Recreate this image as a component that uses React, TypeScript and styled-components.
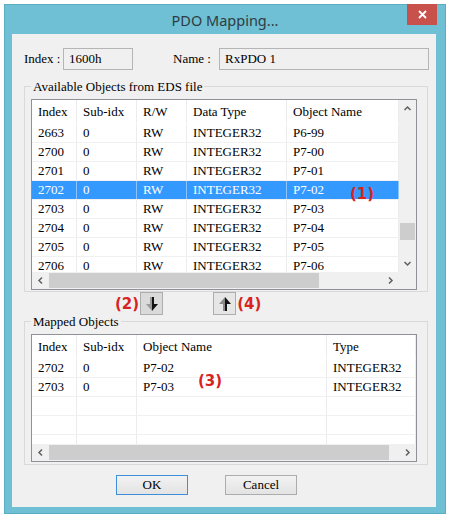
import React from "react";
import styled, { createGlobalStyle } from "styled-components";

const GlobalStyle = createGlobalStyle`
  html, body {
    margin: 0;
    padding: 0;
    background: #ffffff;
  }
  body {
    font-family: "Liberation Serif", "DejaVu Serif", "Times New Roman", serif;
    font-size: 13px;
    color: #000;
  }
`;

const serif = `"Liberation Serif", "DejaVu Serif", "Times New Roman", serif`;

const Frame = styled.div`
  margin: 4px 0 0 4px;
  width: 442px;
  height: 510px;
  box-sizing: border-box;
  background: #6fc0d4;
  border: 1px solid #5aaec2;
  display: flex;
  flex-direction: column;
  padding: 0 9px 6px 7px;
  font-family: ${serif};
`;

const TitleBar = styled.div`
  position: relative;
  height: 29px;
  flex: none;
  margin: 0 -9px 0 -7px;
  display: flex;
  align-items: center;
  justify-content: center;
`;

const Title = styled.span`
  font-family: "Noto Sans", "Open Sans", sans-serif;
  font-size: 14.5px;
  color: #2e3c42;
  padding-top: 1px;
`;

const CloseButton = styled.div`
  position: absolute;
  top: -1px;
  right: 8px;
  width: 30px;
  height: 21px;
  background: #c9514b;
  display: flex;
  align-items: center;
  justify-content: center;
`;

const Client = styled.div`
  flex: 1;
  background: #f0f0f0;
  display: flex;
  flex-direction: column;
  font-family: ${serif};
`;

const FieldRow = styled.div`
  margin-top: 14px;
  height: 22px;
  display: flex;
  align-items: center;
  padding-left: 12px;
`;

const FieldLabel = styled.span<{ $w: number; $ml?: number }>`
  width: ${p => p.$w}px;
  margin-left: ${p => p.$ml ?? 0}px;
  font-family: ${serif};
  font-size: 13px;
`;

const ReadOnlyBox = styled.div<{ $w: number }>`
  width: ${p => p.$w}px;
  height: 22px;
  box-sizing: border-box;
  border: 1px solid #b5b5b5;
  background: #f0f0f0;
  padding-left: 5px;
  line-height: 19px;
  font-family: ${serif};
`;

const GroupBox = styled.fieldset<{ $mt: number; $pb: number }>`
  margin: ${p => p.$mt}px 8px 0 12px;
  width: 404px;
  box-sizing: border-box;
  border: 1px solid #d9d9d9;
  padding: 6px 10px ${p => p.$pb}px 6px;
  min-inline-size: 0;
  font-family: ${serif};
`;

const GroupLegend = styled.legend`
  padding: 0 2px;
  line-height: 13px;
  font-family: ${serif};
  font-size: 13px;
`;

const ListView = styled.div<{ $h: number; $vscroll?: boolean }>`
  position: relative;
  width: 386px;
  height: ${p => p.$h}px;
  box-sizing: border-box;
  border: 1px solid #8e9296;
  background: #ffffff;
  display: grid;
  grid-template-columns: ${p => (p.$vscroll ? "1fr 17px" : "1fr")};
  grid-template-rows: 1fr 17px;
`;

const Rows = styled.div`
  overflow: hidden;
  min-width: 0;
`;

const Row = styled.div<{ $cols: string; $header?: boolean; $selected?: boolean }>`
  display: grid;
  grid-template-columns: ${p => p.$cols};
  height: ${p => (p.$header ? 24 : 19)}px;
  box-sizing: border-box;
  border-bottom: 1px solid ${p => (p.$header ? "#ffffff" : "#f0f0f0")};
  background: ${p => (p.$selected ? "#3399ff" : "#ffffff")};
  color: ${p => (p.$selected ? "#ffffff" : "#000000")};
`;

const Cell = styled.div<{ $selected?: boolean }>`
  padding-left: 6px;
  border-right: 1px solid ${p => (p.$selected ? "#8cc4ff" : "#ececec")};
  white-space: nowrap;
  overflow: hidden;
  display: flex;
  align-items: center;
  font-family: ${serif};
  font-size: 13px;
`;

const HScroll = styled.div`
  display: flex;
  background: #f0f0f0;
  min-width: 0;
`;

const VScroll = styled.div`
  display: flex;
  flex-direction: column;
  background: #f0f0f0;
`;

const Corner = styled.div`
  background: #f0f0f0;
`;

const ScrollArrow = styled.div`
  width: 17px;
  height: 17px;
  flex: none;
  display: flex;
  align-items: center;
  justify-content: center;
`;

const HTrack = styled.div`
  flex: 1;
  display: flex;
  align-items: center;
`;

const HThumb = styled.div<{ $w: number }>`
  width: ${p => p.$w}px;
  height: 15px;
  background: #cdcdcd;
`;

const VTrack = styled.div`
  flex: 1;
  display: flex;
  flex-direction: column;
  align-items: center;
`;

const VThumb = styled.div<{ $top: number }>`
  margin-top: ${p => p.$top}px;
  width: 15px;
  height: 17px;
  background: #cdcdcd;
`;

const Note = styled.span<{ $ml?: number }>`
  font-family: "DejaVu Sans", "Verdana", sans-serif;
  font-weight: bold;
  font-size: 15px;
  color: #d8231f;
  line-height: 18px;
  margin-left: ${p => p.$ml ?? 0}px;
`;

const OverNote = styled(Note)<{ $left: number; $top: number }>`
  position: absolute;
  left: ${p => p.$left}px;
  top: ${p => p.$top}px;
`;

const ArrowRow = styled.div`
  height: 23px;
  display: flex;
  align-items: center;
  padding-left: 103px;
`;

const MoveButton = styled.div<{ $ml?: number; $light?: boolean }>`
  width: 23px;
  height: 23px;
  box-sizing: border-box;
  margin-left: ${p => p.$ml ?? 0}px;
  border: 1px solid #adadad;
  background: ${p => (p.$light ? "#e6e6e6" : "#dadada")};
  display: flex;
  align-items: center;
  justify-content: center;
`;

const ButtonRow = styled.div`
  margin-top: 10px;
  display: flex;
  padding-left: 104px;
  gap: 37px;
`;

const DialogButton = styled.div<{ $default?: boolean }>`
  width: 72px;
  height: 20px;
  box-sizing: border-box;
  border: 1px solid ${p => (p.$default ? "#3c8fd8" : "#acacac")};
  background: linear-gradient(#f2f2f2, #e3e3e3);
  display: flex;
  align-items: center;
  justify-content: center;
  font-family: ${serif};
  font-size: 13px;
`;

type Dir = "up" | "down" | "left" | "right";

const Chevron: React.FC<{ dir: Dir }> = ({ dir }) => {
  const pts = {
    up: "1.5,6 4.5,3 7.5,6",
    down: "1.5,3 4.5,6 7.5,3",
    left: "6,1.5 3,4.5 6,7.5",
    right: "3,1.5 6,4.5 3,7.5",
  }[dir];
  return (
    <svg width="9" height="9" viewBox="0 0 9 9">
      <polyline points={pts} fill="none" stroke="#5f5f5f" strokeWidth="1.5" />
    </svg>
  );
};

const BigArrow: React.FC<{ up?: boolean }> = ({ up }) => (
  <svg width="14" height="16" viewBox="0 0 14 16" style={{ transform: up ? "scaleY(-1)" : undefined }}>
    <polygon points="5,1 7,1 7,15 1,8 5,8" fill={up ? "#8a8a8a" : "#9a9a9a"} />
    <polygon points="7,1 9,1 9,8 13,8 7,15" fill="#111" />
  </svg>
);

const topCols = "45px 60px 50px 100px 1fr";
const bottomCols = "45px 60px 190px 1fr";

const available = [
  ["2663", "0", "RW", "INTEGER32", "P6-99"],
  ["2700", "0", "RW", "INTEGER32", "P7-00"],
  ["2701", "0", "RW", "INTEGER32", "P7-01"],
  ["2702", "0", "RW", "INTEGER32", "P7-02"],
  ["2703", "0", "RW", "INTEGER32", "P7-03"],
  ["2704", "0", "RW", "INTEGER32", "P7-04"],
  ["2705", "0", "RW", "INTEGER32", "P7-05"],
  ["2706", "0", "RW", "INTEGER32", "P7-06"],
];

const mapped = [
  ["2702", "0", "P7-02", "INTEGER32"],
  ["2703", "0", "P7-03", "INTEGER32"],
  ["", "", "", ""],
  ["", "", "", ""],
  ["", "", "", ""],
];

export default function App() {
  return (
    <>
      <GlobalStyle />
      <Frame>
        <TitleBar>
          <Title>PDO Mapping...</Title>
          <CloseButton>
            <svg width="9" height="9" viewBox="0 0 9 9">
              <path d="M1 1L8 8M8 1L1 8" stroke="#fff" strokeWidth="1.8" />
            </svg>
          </CloseButton>
        </TitleBar>
        <Client>
          <FieldRow>
            <FieldLabel $w={39}>Index :</FieldLabel>
            <ReadOnlyBox $w={70}>1600h</ReadOnlyBox>
            <FieldLabel $w={46} $ml={40}>Name :</FieldLabel>
            <ReadOnlyBox $w={210}>RxPDO 1</ReadOnlyBox>
          </FieldRow>

          <GroupBox $mt={10} $pb={1}>
            <GroupLegend>Available Objects from EDS file</GroupLegend>
            <ListView $h={191} $vscroll>
              <Rows>
                <Row $cols={topCols} $header>
                  {["Index", "Sub-idx", "R/W", "Data Type", "Object Name"].map(h => (
                    <Cell key={h}>{h}</Cell>
                  ))}
                </Row>
                {available.map(r => {
                  const sel = r[0] === "2702";
                  return (
                    <Row key={r[0]} $cols={topCols} $selected={sel}>
                      {r.map((c, i) => (
                        <Cell key={i} $selected={sel}>{c}</Cell>
                      ))}
                    </Row>
                  );
                })}
              </Rows>
              <VScroll>
                <ScrollArrow><Chevron dir="up" /></ScrollArrow>
                <VTrack>
                  <VThumb $top={106} />
                </VTrack>
                <ScrollArrow><Chevron dir="down" /></ScrollArrow>
              </VScroll>
              <HScroll>
                <ScrollArrow><Chevron dir="left" /></ScrollArrow>
                <HTrack><HThumb $w={270} /></HTrack>
                <ScrollArrow><Chevron dir="right" /></ScrollArrow>
              </HScroll>
              <Corner />
              <OverNote $left={318} $top={85}>(1)</OverNote>
            </ListView>
          </GroupBox>

          <ArrowRow>
            <Note>(2)</Note>
            <MoveButton $ml={1}><BigArrow /></MoveButton>
            <MoveButton $ml={50} $light><BigArrow up /></MoveButton>
            <Note $ml={1}>(4)</Note>
          </ArrowRow>

          <GroupBox $mt={0} $pb={2}>
            <GroupLegend>Mapped Objects</GroupLegend>
            <ListView $h={128}>
              <Rows>
                <Row $cols={bottomCols} $header>
                  {["Index", "Sub-idx", "Object Name", "Type"].map(h => (
                    <Cell key={h}>{h}</Cell>
                  ))}
                </Row>
                {mapped.map((r, k) => (
                  <Row key={k} $cols={bottomCols}>
                    {r.map((c, i) => (
                      <Cell key={i}>{c}</Cell>
                    ))}
                  </Row>
                ))}
              </Rows>
              <HScroll>
                <ScrollArrow><Chevron dir="left" /></ScrollArrow>
                <HTrack><HThumb $w={340} /></HTrack>
                <ScrollArrow><Chevron dir="right" /></ScrollArrow>
              </HScroll>
              <OverNote $left={166} $top={37}>(3)</OverNote>
            </ListView>
          </GroupBox>

          <ButtonRow>
            <DialogButton $default>OK</DialogButton>
            <DialogButton>Cancel</DialogButton>
          </ButtonRow>
        </Client>
      </Frame>
    </>
  );
}
